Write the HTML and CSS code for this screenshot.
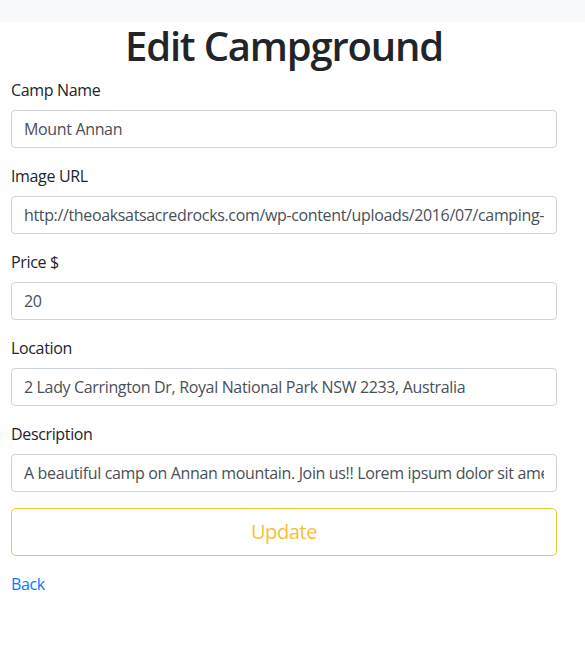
FILE: index.html
```html
<!DOCTYPE html>
<html lang="en">
<head>
<meta charset="utf-8">
<title>Edit Campground</title>
<link rel="stylesheet" href="styles.css">
</head>
<body>
<nav class="topbar"></nav>
<main class="page">
  <h1 class="title">Edit Campground</h1>
  <form class="form">
    <div class="group">
      <label class="label" for="name">Camp Name</label>
      <input class="field" id="name" type="text" value="Mount Annan">
    </div>
    <div class="group">
      <label class="label" for="image">Image URL</label>
      <input class="field" id="image" type="text" value="http://theoaksatsacredrocks.com/wp-content/uploads/2016/07/camping-hero.jpg">
    </div>
    <div class="group">
      <label class="label" for="price">Price $</label>
      <input class="field" id="price" type="text" value="20">
    </div>
    <div class="group">
      <label class="label" for="location">Location</label>
      <input class="field" id="location" type="text" value="2 Lady Carrington Dr, Royal National Park NSW 2233, Australia">
    </div>
    <div class="group">
      <label class="label" for="desc">Description</label>
      <input class="field" id="desc" type="text" value="A beautiful camp on Annan mountain. Join us!! Lorem ipsum dolor sit amet, consectetur adipiscing elit.">
    </div>
    <button class="btn-update" type="button">Update</button>
  </form>
  <a class="back" href="#">Back</a>
</main>
</body>
</html>
```

FILE: styles.css
```css
* { box-sizing: border-box; }
html, body { margin: 0; padding: 0; }
body {
  font-family: "Open Sans", "Noto Sans", sans-serif;
  font-size: 16px;
  line-height: 1.5;
  letter-spacing: -0.35px;
  color: #212529;
  background: #fff;
}
.topbar {
  height: 22px;
  background: #f8f9fa;
}
.page {
  width: 568px;
  padding: 0 11px;
}
.title {
  margin: 0 0 8px;
  font-size: 40px;
  line-height: 48px;
  font-weight: 600;
  letter-spacing: -1.2px;
  text-align: center;
  color: #212529;
}
.form { margin: 0; }
.group {
  display: flex;
  flex-direction: column;
  margin-bottom: 16px;
}
.label {
  display: block;
  margin-bottom: 8px;
  font-size: 16px;
  line-height: 24px;
}
.field {
  display: block;
  width: 100%;
  height: 38px;
  padding: 6px 12px;
  font-family: inherit;
  font-size: 16px;
  line-height: 24px;
  letter-spacing: -0.35px;
  color: #495057;
  background: #fff;
  border: 1px solid #ced4da;
  border-radius: 4px;
  outline: none;
}
.btn-update {
  display: block;
  width: 100%;
  height: 48px;
  margin: 0 0 16px;
  padding: 8px 16px;
  font-family: inherit;
  font-size: 20px;
  line-height: 30px;
  letter-spacing: -0.4px;
  color: #f9bd3c;
  background: transparent;
  border: 1px solid #f3c530;
  border-radius: 4.8px;
  cursor: pointer;
}
.back {
  display: inline-block;
  color: #007bff;
  text-decoration: none;
  line-height: 24px;
}
```
